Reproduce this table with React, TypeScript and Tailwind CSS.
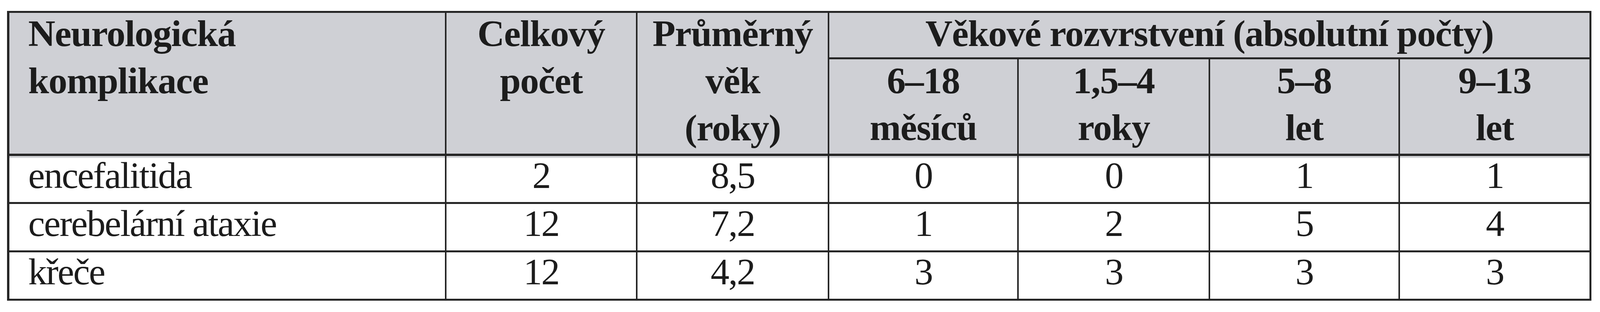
import React from "react";

const rows = [
  { name: "encefalitida", total: "2", age: "8,5", counts: ["0", "0", "1", "1"] },
  { name: "cerebelární ataxie", total: "12", age: "7,2", counts: ["1", "2", "5", "4"] },
  { name: "křeče", total: "12", age: "4,2", counts: ["3", "3", "3", "3"] },
];

const groups = [
  ["6–18", "měsíců"],
  ["1,5–4", "roky"],
  ["5–8", "let"],
  ["9–13", "let"],
];

export default function App() {
  return (
    <div className="min-h-screen bg-white pl-[0.45vw] pt-[28px] font-['Liberation_Serif','Times_New_Roman',serif] text-[96px] text-[#1c1c1c]">
      <table className="w-[99.02vw] table-fixed border-collapse border-[5px] border-l-[6px] border-[#262626]">
        <colgroup>
          <col className="w-[27.36%]" />
          <col className="w-[11.96%]" />
          <col className="w-[12%]" />
          <col className="w-[11.86%]" />
          <col className="w-[11.98%]" />
          <col className="w-[11.86%]" />
          <col className="w-[11.98%]" />
        </colgroup>
        <thead className="bg-[#cfd0d5] font-bold tracking-[calc(1.04vw-44px)]">
          <tr className="h-[119px]">
            <th rowSpan={2} className="border-[4px] border-b-[6px] border-[#262626] p-0 pl-[1.17vw] pt-[3px] text-left align-top font-bold">
              <div className="flex flex-col gap-[21px] leading-[100px]">
                <span>Neurologická</span>
                <span>komplikace</span>
              </div>
            </th>
            <th rowSpan={2} className="border-[4px] border-b-[6px] border-[#262626] p-0 pt-[3px] text-center align-top font-bold">
              <div className="flex flex-col gap-[21px] leading-[100px]">
                <span>Celkový</span>
                <span>počet</span>
              </div>
            </th>
            <th rowSpan={2} className="border-[4px] border-b-[6px] border-[#262626] p-0 pt-[3px] text-center align-top font-bold">
              <div className="flex flex-col gap-[21px] leading-[100px]">
                <span>Průměrný</span>
                <span>věk</span>
                <span>(roky)</span>
              </div>
            </th>
            <th colSpan={4} className="border-[4px] border-b-[5px] border-[#262626] p-0 pt-[3px] text-center align-top font-bold leading-[100px]">
              Věkové rozvrstvení (absolutní počty)
            </th>
          </tr>
          <tr className="h-[247px]">
            {groups.map((g, i) => (
              <th key={i} className="border-[4px] border-b-[6px] border-[#262626] p-0 pt-[5px] text-center align-top font-bold">
                <div className="flex flex-col gap-[20px] leading-[100px]">
                  <span>{g[0]}</span>
                  <span>{g[1]}</span>
                </div>
              </th>
            ))}
          </tr>
        </thead>
        <tbody className="tracking-[calc(0.867vw-38px)]">
          {rows.map((r, idx) => {
            // first body row carries the grey strip left under the header rule
            const strip = idx === 0 ? "shadow-[inset_0_5px_0_#d3d4d8]" : "";
            return (
              <tr key={r.name} className="h-[124px]">
                <td className={`border-[4px] border-y-[5px] border-[#262626] p-0 pl-[1.17vw] align-top leading-[100px] ${strip}`}>
                  {r.name}
                </td>
                <td className={`border-[4px] border-y-[5px] border-[#262626] p-0 text-center align-top leading-[100px] ${strip}`}>
                  {r.total}
                </td>
                <td className={`border-[4px] border-y-[5px] border-[#262626] p-0 text-center align-top leading-[100px] ${strip}`}>
                  {r.age}
                </td>
                {r.counts.map((c, i) => (
                  <td key={i} className={`border-[4px] border-y-[5px] border-[#262626] p-0 text-center align-top leading-[100px] ${strip}`}>
                    {c}
                  </td>
                ))}
              </tr>
            );
          })}
        </tbody>
      </table>
    </div>
  );
}
